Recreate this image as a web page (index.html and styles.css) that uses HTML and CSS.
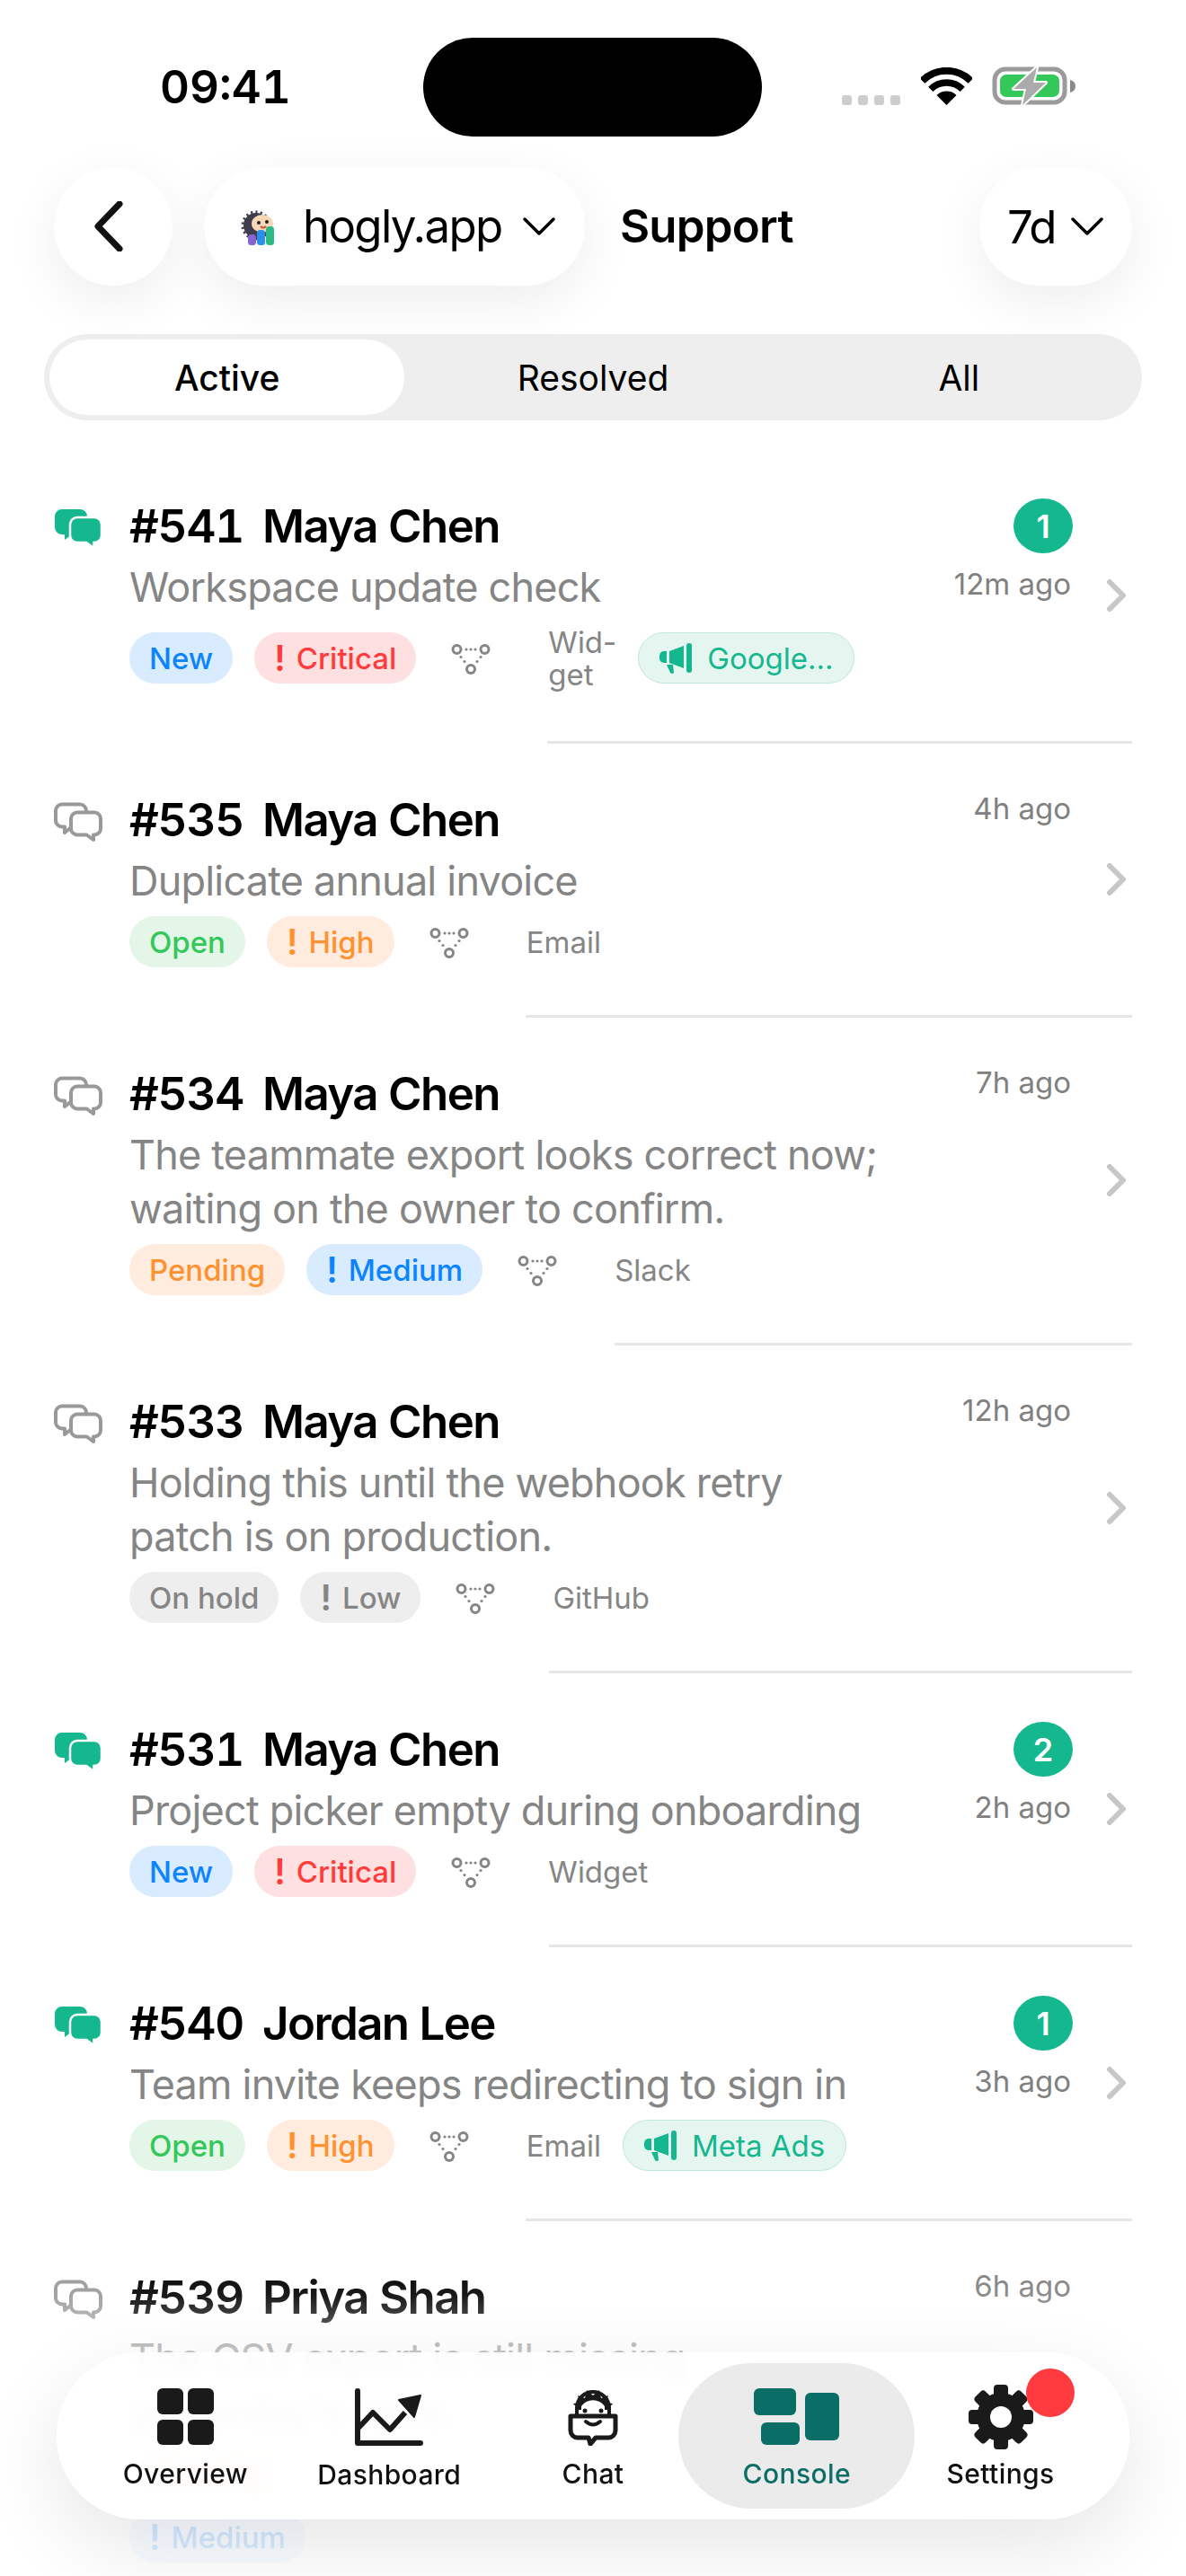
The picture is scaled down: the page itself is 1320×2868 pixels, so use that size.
FILE: index.html
```html
<!DOCTYPE html>
<html lang="en">
<head>
<meta charset="utf-8">
<title>Support</title>
<link rel="stylesheet" href="styles.css">
</head>
<body>
<svg class="defs" width="0" height="0" aria-hidden="true">
  <defs>
    <symbol id="flow" viewBox="0 0 48 48">
      <g fill="none" stroke="#858585" stroke-width="3"><circle cx="9.5" cy="14" r="4.5"/><circle cx="40.5" cy="14" r="4.5"/><circle cx="25" cy="36" r="4.5"/></g>
      <g fill="#858585"><circle cx="20" cy="14" r="1.6"/><circle cx="25" cy="14" r="1.6"/><circle cx="30" cy="14" r="1.6"/><circle cx="14" cy="22.5" r="1.6"/><circle cx="18" cy="27.5" r="1.6"/><circle cx="36" cy="22.5" r="1.6"/><circle cx="32" cy="27.5" r="1.6"/></g>
    </symbol>
    <symbol id="bubble-off" viewBox="0 0 54 44">
      <path d="M9 2.5h20a7 7 0 0 1 7 7v11a7 7 0 0 1-7 7H20l-8 6.500v-6.500H9a7 7 0 0 1-7-7v-11a7 7 0 0 1 7-7z" fill="#fff" stroke="#999" stroke-width="4" stroke-linejoin="round"/>
      <path d="M26 11.500h19a7 7 0 0 1 7 7v11a7 7 0 0 1-7 7h-1v5.500l-7.500-5.500H26a7 7 0 0 1-7-7v-11a7 7 0 0 1 7-7z" fill="#fff" stroke="#999" stroke-width="4" stroke-linejoin="round"/>
    </symbol>
    <symbol id="bubble-on" viewBox="0 0 54 44">
      <path d="M9 1h20a8 8 0 0 1 8 8v12a8 8 0 0 1-8 8H20l-8 6v-6H9a8 8 0 0 1-8-8V9a8 8 0 0 1 8-8z" fill="#14b78e"/>
      <path d="M26 10h19a8 8 0 0 1 8 8v12a8 8 0 0 1-8 8h-.500v6L36 38H26a8 8 0 0 1-8-8V18a8 8 0 0 1 8-8z" fill="#14b78e" stroke="#fff" stroke-width="2.500"/>
    </symbol>
    <symbol id="mega" viewBox="0 0 36 34">
      <rect x="30" y="0" width="6" height="33" rx="3" fill="#14b78e"/>
      <path d="M11 9 27 3v25L11 22z" fill="#14b78e"/>
      <path d="M8 9v13H5a5 5 0 0 1-5-5v-3a5 5 0 0 1 5-5z" fill="#14b78e"/>
      <path d="M8 24h7l1 9a2.500 2.500 0 0 1-4 0z" fill="#14b78e"/>
    </symbol>
    <symbol id="chev-right" viewBox="0 0 22 36">
      <path d="M3 3 18 18 3 33" fill="none" stroke="#c7c7c7" stroke-width="6" stroke-linecap="round" stroke-linejoin="round"/>
    </symbol>
    <symbol id="chev-down" viewBox="0 0 36 20">
      <path d="M2 2 18 18 34 2" fill="none" stroke="#000" stroke-width="3.500" stroke-linecap="round" stroke-linejoin="round"/>
    </symbol>
  </defs>
</svg>

<div class="screen">
  <div class="status">
    <div class="clock">09:41</div>
    <div class="island"></div>
    <div class="status-icons">
      <div class="signal"><i></i><i></i><i></i><i></i></div>
      <svg class="wifi" viewBox="0 0 57 42"><path d="M1.600 15a38 38 0 0 1 53.800 0" fill="none" stroke="#000" stroke-width="8"/><path d="M10.800 24.300a25 25 0 0 1 35.400 0" fill="none" stroke="#000" stroke-width="7.500"/><path d="M28.500 42 17.500 31a16 16 0 0 1 22 0z" fill="#000"/></svg>
      <svg class="battery" viewBox="0 0 94 44"><rect x="3" y="3" width="78" height="37" rx="12" fill="none" stroke="#9b9b9b" stroke-width="5"/><rect x="9" y="9" width="66" height="25" rx="7" fill="#34c759"/><path d="M87 15c4 1 6 3.500 6 7s-2 6-6 7z" fill="#8a8a8a"/><path d="M50 1 24 25h14l-4 18 26-25H46z" fill="#ababab" stroke="#fff" stroke-width="4" stroke-linejoin="round" paint-order="stroke"/></svg>
    </div>
  </div>

  <div class="topbar">
    <button class="round back"><svg viewBox="0 0 32 56"><path d="M28 3 4 28l24 25" fill="none" stroke="#111" stroke-width="7" stroke-linecap="round" stroke-linejoin="round"/></svg></button>
    <button class="round app">
      <svg class="logo" viewBox="0 0 40 42">
        <circle cx="17" cy="20" r="14" fill="#3d3d4e" stroke="#3d3d4e" stroke-width="5" stroke-dasharray="2 3"/>
        <ellipse cx="24" cy="18" rx="12" ry="10" fill="#f6d7b8"/>
        <circle cx="20" cy="17" r="2" fill="#222"/><circle cx="29" cy="16" r="2" fill="#222"/>
        <path d="M22 21q3 3 6 0" fill="none" stroke="#c8553d" stroke-width="2"/>
        <rect x="8" y="30" width="9" height="12" rx="3.500" fill="#8a63d2"/>
        <rect x="18" y="25" width="9" height="17" rx="3.500" fill="#2b8fe8"/>
        <rect x="28" y="21" width="9" height="21" rx="3.500" fill="#2dbb85"/>
      </svg>
      <span class="app-name">hogly.app</span>
      <svg class="chev"><use href="#chev-down"/></svg>
    </button>
    <h1 class="title">Support</h1>
    <button class="round range"><span>7d</span><svg class="chev"><use href="#chev-down"/></svg></button>
  </div>

  <div class="segment">
    <div class="seg seg-on">Active</div>
    <div class="seg">Resolved</div>
    <div class="seg">All</div>
  </div>

  <div class="list">
    <article class="row">
      <div class="cells">
        <svg class="kind"><use href="#bubble-on"/></svg>
        <div class="main">
          <div class="head"><span>#541</span><span class="who">Maya Chen</span></div>
          <p class="sub">Workspace update check</p>
          <div class="tags">
            <span class="pill blue">New</span>
            <span class="pill red"><b>!</b>Critical</span>
            <svg class="flow"><use href="#flow"/></svg>
            <span class="source source-wrap">Wid-<br>get</span>
            <span class="pill ad"><svg class="mega"><use href="#mega"/></svg>Google...</span>
          </div>
        </div>
        <div class="side"><span class="count">1</span><time class="when">12m ago</time></div>
        <svg class="go"><use href="#chev-right"/></svg>
      </div>
      <div class="rule at-549"></div>
    </article>

    <article class="row">
      <div class="cells">
        <svg class="kind"><use href="#bubble-off"/></svg>
        <div class="main">
          <div class="head"><span>#535</span><span class="who">Maya Chen</span></div>
          <p class="sub">Duplicate annual invoice</p>
          <div class="tags">
            <span class="pill green">Open</span>
            <span class="pill orange"><b>!</b>High</span>
            <svg class="flow"><use href="#flow"/></svg>
            <span class="source">Email</span>
          </div>
        </div>
        <div class="side"><time class="when">4h ago</time></div>
        <svg class="go"><use href="#chev-right"/></svg>
      </div>
      <div class="rule at-525"></div>
    </article>

    <article class="row">
      <div class="cells">
        <svg class="kind"><use href="#bubble-off"/></svg>
        <div class="main">
          <div class="head"><span>#534</span><span class="who">Maya Chen</span></div>
          <p class="sub">The teammate export looks correct now; waiting on the owner to confirm.</p>
          <div class="tags">
            <span class="pill orange">Pending</span>
            <span class="pill blue"><b>!</b>Medium</span>
            <svg class="flow"><use href="#flow"/></svg>
            <span class="source">Slack</span>
          </div>
        </div>
        <div class="side"><time class="when">7h ago</time></div>
        <svg class="go"><use href="#chev-right"/></svg>
      </div>
      <div class="rule at-624"></div>
    </article>

    <article class="row">
      <div class="cells">
        <svg class="kind"><use href="#bubble-off"/></svg>
        <div class="main">
          <div class="head"><span>#533</span><span class="who">Maya Chen</span></div>
          <p class="sub">Holding this until the webhook retry patch is on production.</p>
          <div class="tags">
            <span class="pill grey">On hold</span>
            <span class="pill grey"><b>!</b>Low</span>
            <svg class="flow"><use href="#flow"/></svg>
            <span class="source">GitHub</span>
          </div>
        </div>
        <div class="side"><time class="when">12h ago</time></div>
        <svg class="go"><use href="#chev-right"/></svg>
      </div>
      <div class="rule at-551"></div>
    </article>

    <article class="row">
      <div class="cells">
        <svg class="kind"><use href="#bubble-on"/></svg>
        <div class="main">
          <div class="head"><span>#531</span><span class="who">Maya Chen</span></div>
          <p class="sub">Project picker empty during onboarding</p>
          <div class="tags">
            <span class="pill blue">New</span>
            <span class="pill red"><b>!</b>Critical</span>
            <svg class="flow"><use href="#flow"/></svg>
            <span class="source">Widget</span>
          </div>
        </div>
        <div class="side"><span class="count">2</span><time class="when">2h ago</time></div>
        <svg class="go"><use href="#chev-right"/></svg>
      </div>
      <div class="rule at-551"></div>
    </article>

    <article class="row">
      <div class="cells">
        <svg class="kind"><use href="#bubble-on"/></svg>
        <div class="main">
          <div class="head"><span>#540</span><span class="who">Jordan Lee</span></div>
          <p class="sub">Team invite keeps redirecting to sign in</p>
          <div class="tags">
            <span class="pill green">Open</span>
            <span class="pill orange"><b>!</b>High</span>
            <svg class="flow"><use href="#flow"/></svg>
            <span class="source">Email</span>
            <span class="pill ad"><svg class="mega"><use href="#mega"/></svg>Meta Ads</span>
          </div>
        </div>
        <div class="side"><span class="count">1</span><time class="when">3h ago</time></div>
        <svg class="go"><use href="#chev-right"/></svg>
      </div>
      <div class="rule at-525"></div>
    </article>

    <article class="row">
      <div class="cells">
        <svg class="kind"><use href="#bubble-off"/></svg>
        <div class="main">
          <div class="head"><span>#539</span><span class="who">Priya Shah</span></div>
          <p class="sub">The CSV export is still missing yesterday's rows.</p>
          <div class="tags tags-stack">
            <span class="pill orange">Pending</span>
            <span class="pill blue"><b>!</b>Medium</span>
            <svg class="flow"><use href="#flow"/></svg>
          </div>
        </div>
        <div class="side"><time class="when">6h ago</time></div>
      </div>
    </article>
  </div>

  <div class="fade"></div>

  <nav class="tabbar">
    <a class="tab">
      <svg class="tab-icon" viewBox="0 0 63 63"><g fill="#1a1a1a"><rect width="29" height="29" rx="6"/><rect x="34" width="29" height="29" rx="6"/><rect y="35" width="29" height="28" rx="6"/><rect x="34" y="35" width="29" height="28" rx="6"/></g></svg>
      <span>Overview</span>
    </a>
    <a class="tab">
      <svg class="tab-icon icon-chart" viewBox="0 0 76 64"><path d="M3 3v58h70" fill="none" stroke="#1a1a1a" stroke-width="6" stroke-linecap="round" stroke-linejoin="round"/><path d="M4 44 20 27l19 19 17-19" fill="none" stroke="#1a1a1a" stroke-width="6" stroke-linejoin="round"/><path d="M49 13 73 8l-7 24z" fill="#1a1a1a" stroke="#1a1a1a" stroke-width="2" stroke-linejoin="round"/></svg>
      <span>Dashboard</span>
    </a>
    <a class="tab">
      <svg class="tab-icon icon-chat" viewBox="0 0 56 66">
        <path d="M10 33V24a18 18 0 0 1 36 0v9" fill="none" stroke="#1a1a1a" stroke-width="4"/>
        <path d="M6 19l7-1-2-8 8 3 2-9 7 6 7-6 2 9 8-3-2 8 7 1-6 7H12z" fill="#1a1a1a"/>
        <path d="M15 22a16 16 0 0 1 26 0v9H15z" fill="#fff"/>
        <circle cx="19" cy="27" r="2.500" fill="#1a1a1a"/><circle cx="37" cy="27" r="2.500" fill="#1a1a1a"/>
        <path d="M3 33h50v16a8 8 0 0 1-8 8H31l-6 7-2-7H11a8 8 0 0 1-8-8z" fill="none" stroke="#1a1a1a" stroke-width="5" stroke-linejoin="round"/>
        <path d="M20 39q8 7 16 0" fill="none" stroke="#1a1a1a" stroke-width="4" stroke-linecap="round"/>
      </svg>
      <span>Chat</span>
    </a>
    <a class="tab tab-on">
      <svg class="tab-icon icon-console" viewBox="0 0 95 63"><g fill="#0b6e66"><rect width="47" height="30" rx="6"/><rect x="8" y="38" width="43" height="25" rx="6"/><rect x="57" y="5" width="38" height="53" rx="6"/></g></svg>
      <span>Console</span>
    </a>
    <a class="tab tab-dot">
      <svg class="tab-icon icon-gear" viewBox="0 0 72 72">
        <g fill="#1a1a1a">
          <circle cx="36" cy="36" r="27"/>
          <rect x="28" y="0" width="16" height="16" rx="4"/>
          <rect x="28" y="0" width="16" height="16" rx="4" transform="rotate(45 36 36)"/>
          <rect x="28" y="0" width="16" height="16" rx="4" transform="rotate(90 36 36)"/>
          <rect x="28" y="0" width="16" height="16" rx="4" transform="rotate(135 36 36)"/>
          <rect x="28" y="0" width="16" height="16" rx="4" transform="rotate(180 36 36)"/>
          <rect x="28" y="0" width="16" height="16" rx="4" transform="rotate(225 36 36)"/>
          <rect x="28" y="0" width="16" height="16" rx="4" transform="rotate(270 36 36)"/>
          <rect x="28" y="0" width="16" height="16" rx="4" transform="rotate(315 36 36)"/>
        </g>
        <circle cx="36" cy="36" r="12" fill="#fff"/>
      </svg>
      <span>Settings</span>
    </a>
  </nav>
</div>
</body>
</html>
```

FILE: styles.css
```css
* { box-sizing: border-box; }
html, body { margin: 0; padding: 0; height: 2868px; overflow: hidden; background: #fff; }
body { font-family: Inter, "Liberation Sans", sans-serif; color: #000; }
.defs { position: absolute; }
.screen { position: relative; width: 1320px; height: 2868px; overflow: hidden; background: #fff; }

/* status bar */
.status { height: 186px; display: flex; align-items: flex-start; padding-left: 178px; }
.clock { width: 293px; margin-top: 67px; font-size: 51px; line-height: 60px; font-weight: 600; font-variant-numeric: tabular-nums; }
.island { width: 377px; height: 110px; margin-top: 42px; background: #000; border-radius: 55px; }
.status-icons { display: flex; align-items: flex-end; margin-left: 89px; margin-top: 75px; height: 43px; }
.signal { display: flex; gap: 7px; margin-bottom: 1px; }
.signal i { display: block; width: 11px; height: 11px; border-radius: 3px; background: #cdcdcd; }
.wifi { width: 57px; height: 42px; margin-left: 23px; margin-bottom: 1px; }
.battery { width: 94px; height: 44px; margin-left: 22px; }

/* top bar */
.topbar { height: 132px; padding: 0 60px; display: flex; align-items: center; }
.round { height: 132px; border: 0; border-radius: 66px; background: #fff; box-shadow: 0 18px 60px rgba(0, 0, 0, .07); display: flex; align-items: center; font: inherit; color: inherit; padding: 0; }
.back { width: 132px; justify-content: center; }
.back svg { width: 32px; height: 56px; margin-left: -10px; }
.app { width: 424px; margin-left: 35px; padding-left: 41px; }
.logo { width: 40px; height: 42px; }
.app-name { margin-left: 29px; font-size: 51px; line-height: 60px; letter-spacing: -1.7px; }
.chev { width: 36px; height: 20px; }
.app .chev { margin-left: 23px; }
.title { margin: 0 0 0 39px; font-size: 51px; line-height: 60px; font-weight: 600; letter-spacing: -.8px; }
.range { width: 170px; margin-left: auto; padding-left: 31px; font-size: 51px; letter-spacing: -2px; }
.range .chev { margin-left: 17px; }

/* segmented control */
.segment { margin: 54px 49px 0; height: 96px; padding: 6px; background: #eee; border-radius: 48px; display: grid; grid-template-columns: repeat(3, 1fr); column-gap: 12px; }
.seg { display: flex; align-items: center; justify-content: center; font-size: 39px; font-weight: 400; border-radius: 42px; }
.seg-on { background: #fff; font-weight: 500; }

/* list */
.list { margin-top: 33px; }
.cells { display: flex; align-items: flex-start; padding: 54px 60px 53px; position: relative; }
.kind { flex: none; width: 54px; height: 44px; margin-top: 11px; margin-right: 30px; }
.main { width: 836px; flex: none; }
.head { display: flex; gap: 21px; font-size: 51px; line-height: 60px; font-weight: 600; letter-spacing: -1.2px; font-variant-numeric: tabular-nums; position: relative; top: 1px; }
.who { letter-spacing: -1.6px; }
.sub { margin: 9px 0; font-size: 45px; line-height: 60px; color: #858585; letter-spacing: -.8px; }
.tags { display: flex; align-items: center; min-height: 57px; gap: 24px; }
.tags-stack { flex-direction: column; align-items: flex-start; gap: 14px; }
.pill { display: inline-flex; align-items: center; height: 57px; padding: 0 22px; border-radius: 28.5px; font-size: 33px; font-weight: 500; white-space: nowrap; }
.pill b { font-size: 39px; line-height: 1; font-weight: 600; margin-right: 12px; }
.blue { background: #d9ebff; color: #0a84ff; }
.red { background: #ffe0e0; color: #ff3b3b; }
.green { background: #e3f6e8; color: #34c759; }
.orange { background: #ffecdf; color: #ff9230; }
.grey { background: #eee; color: #858585; }
.ad { background: #e5f6f1; color: #14b78e; border: 1.500px solid #bde8dc; padding: 0 23px; font-weight: 400; }
.mega { width: 36px; height: 34px; margin-right: 17px; }
.flow { flex: none; width: 48px; height: 48px; margin: 0 39px 0 12px; }
.source { font-size: 33px; line-height: 36px; color: #858585; }
.source-wrap { padding: 3.500px 0; }

.side { margin-left: auto; margin-right: 68px; display: flex; flex-direction: column; align-items: flex-end; width: 160px; flex: none; }
.count { width: 66px; height: 61px; margin-right: -2px; border-radius: 50%; background: #14b78e; color: #fff; font-size: 36px; font-weight: 600; display: flex; align-items: center; justify-content: center; margin-bottom: 16px; }
.when { font-size: 33px; line-height: 36px; color: #808080; white-space: nowrap; }
.go { position: absolute; right: 66px; top: 50%; width: 22px; height: 36px; margin-top: -18px; }

.rule { height: 3px; background: #e6e6e6; margin-right: 60px; }
.at-549 { margin-left: 609px; }
.at-525 { margin-left: 585px; }
.at-624 { margin-left: 684px; }
.at-551 { margin-left: 611px; }

/* bottom fade + tab bar */
.fade { position: absolute; left: 0; right: 0; bottom: 0; height: 368px; background: linear-gradient(to bottom, rgba(255,255,255,0) 0, rgba(255,255,255,.1) 56px, rgba(255,255,255,.55) 120px, rgba(255,255,255,.8) 300px, rgba(255,255,255,.85) 100%); }
.tabbar { position: absolute; left: 63px; top: 2619px; width: 1194px; height: 186px; padding: 12px 30px 0; border-radius: 93px; background: rgba(255,255,255,.86); -webkit-backdrop-filter: blur(6px); backdrop-filter: blur(6px); box-shadow: 0 30px 90px rgba(0,0,0,.1); display: grid; grid-template-columns: repeat(5, 1fr); align-items: start; }
.tab { position: relative; display: flex; flex-direction: column; align-items: center; font-size: 30px; line-height: 36px; font-weight: 500; color: #111; padding-top: 28px; }
.tab > svg { position: relative; }
.tab span { position: relative; margin-top: 14px; letter-spacing: .4px; }
.tab-icon { width: 63px; height: 63px; display: block; }
.icon-chart { width: 76px; height: 64px; }
.icon-chat { width: 56px; height: 66px; margin-top: -2px; margin-bottom: -1px; }
.icon-console { width: 95px; }
.icon-gear { width: 72px; height: 72px; margin-top: -4px; margin-bottom: -5px; }
.tab-on { color: #0b6e66; }
.tab-on::before { content: ""; position: absolute; left: -18px; right: -18px; top: 0; height: 162px; border-radius: 81px; background: #ebebeb; }
.tab-dot::after { content: ""; position: absolute; left: 142px; top: 6px; width: 54px; height: 54px; border-radius: 50%; background: #ff3b3f; }
```
